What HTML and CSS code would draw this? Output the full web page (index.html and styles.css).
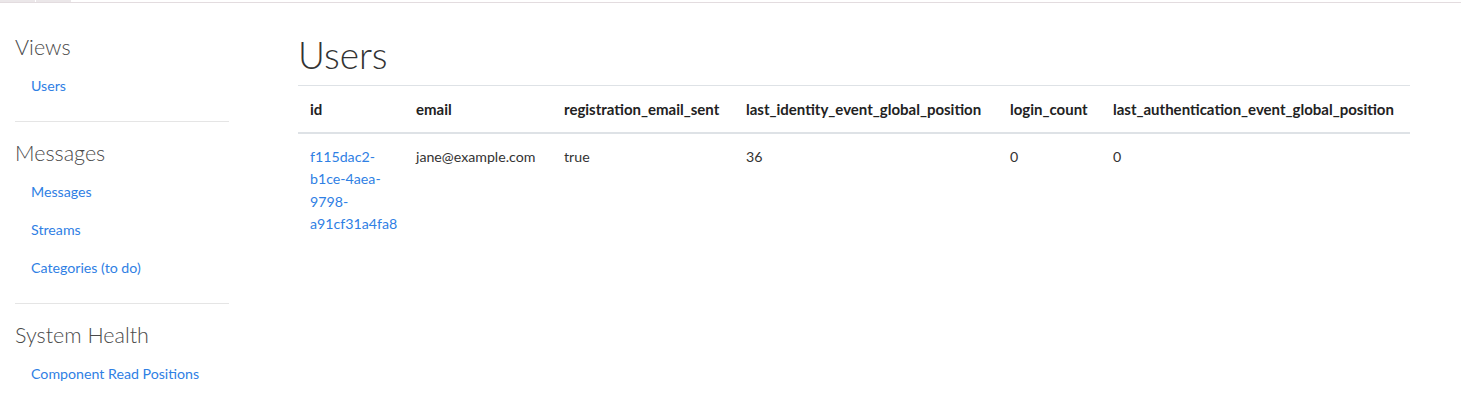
FILE: index.html
```html
<!DOCTYPE html>
<html lang="en">
<head>
<meta charset="utf-8">
<title>Users</title>
<link rel="stylesheet" href="styles.css">
</head>
<body>
<div class="topbar">
  <span class="tab"></span>
  <span class="tab"></span>
</div>
<div class="layout">
  <nav class="sidebar">
    <section class="nav-group">
      <h4 class="nav-heading">Views</h4>
      <a class="nav-link" href="#">Users</a>
    </section>
    <section class="nav-group">
      <h4 class="nav-heading">Messages</h4>
      <a class="nav-link" href="#">Messages</a>
      <a class="nav-link" href="#">Streams</a>
      <a class="nav-link" href="#">Categories (to do)</a>
    </section>
    <section class="nav-group">
      <h4 class="nav-heading">System Health</h4>
      <a class="nav-link" href="#">Component Read Positions</a>
    </section>
  </nav>
  <main class="main">
    <h1 class="page-title">Users</h1>
    <table class="table">
      <colgroup>
        <col class="c-id">
        <col class="c-email">
        <col class="c-reg">
        <col class="c-lie">
        <col class="c-login">
        <col class="c-lae">
      </colgroup>
      <thead>
        <tr>
          <th>id</th>
          <th>email</th>
          <th>registration_email_sent</th>
          <th>last_identity_event_global_position</th>
          <th>login_count</th>
          <th>last_authentication_event_global_position</th>
        </tr>
      </thead>
      <tbody>
        <tr>
          <td><a class="id-link" href="#">f115dac2-b1ce-4aea-9798-a91cf31a4fa8</a></td>
          <td>jane@example.com</td>
          <td>true</td>
          <td>36</td>
          <td>0</td>
          <td>0</td>
        </tr>
      </tbody>
    </table>
  </main>
</div>
</body>
</html>
```

FILE: styles.css
```css
* { box-sizing: border-box; }

html, body {
  margin: 0;
  padding: 0;
  background: #fff;
}

body {
  font-family: "Lato", "Liberation Sans", sans-serif;
  font-size: 14.2px;
  line-height: 22.5px;
  color: #333;
}

.topbar {
  height: 3px;
  border-bottom: 1px solid #e3dcdf;
  display: flex;
  gap: 1px;
}

.tab {
  width: 35px;
  height: 2px;
  background: #ebe7e9;
}

.layout {
  display: flex;
}

.sidebar {
  flex: 0 0 243.5px;
  padding: 13px 15px 0 15px;
}

.nav-group {
  display: flex;
  flex-direction: column;
  padding-top: 18px;
  padding-bottom: 16px;
  border-bottom: 1px solid #e5e5e5;
}

.nav-group:last-child {
  border-bottom: none;
}

.nav-heading {
  margin: 0 0 7px 0;
  font-size: 21.5px;
  line-height: 26px;
  font-weight: 300;
  color: #4a4a4a;
}

.nav-link {
  display: block;
  padding: 8px 16px;
  line-height: 22px;
  color: #2f80e4;
  text-decoration: none;
}

.main {
  flex: 1;
  padding: 30px 51px 0 54.5px;
}

.page-title {
  margin: 0 0 8px 0;
  font-size: 37px;
  line-height: 44px;
  font-weight: 300;
  color: #333;
}

.table {
  width: 100%;
  border-collapse: collapse;
  table-layout: fixed;
}

.c-id { width: 106px; }
.c-email { width: 148px; }
.c-reg { width: 182px; }
.c-lie { width: 264px; }
.c-login { width: 103px; }

.table th,
.table td {
  padding: 11.5px 12px;
  text-align: left;
  vertical-align: top;
}

.table th {
  font-size: 15px;
  font-weight: 700;
  color: #222;
  white-space: nowrap;
  border-top: 1px solid #dee2e6;
  border-bottom: 2px solid #dee2e6;
}

.table td {
  padding-top: 12px;
}

.id-link {
  color: #2f80e4;
  text-decoration: none;
}
```
